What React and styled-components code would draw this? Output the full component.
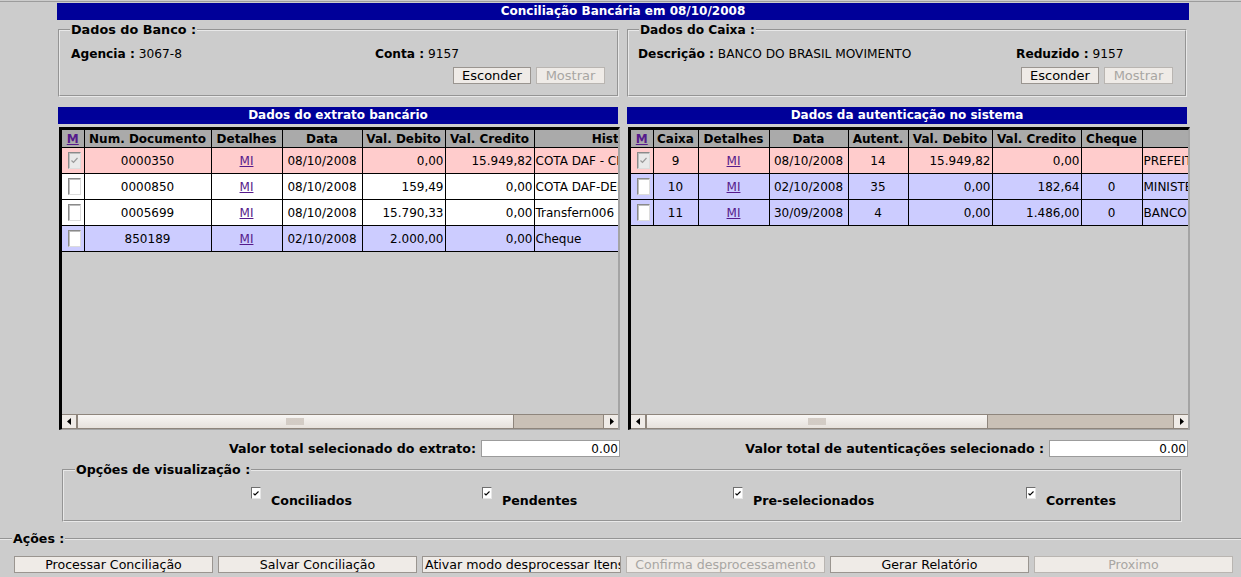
import React from "react";
import styled, { createGlobalStyle } from "styled-components";

const GlobalStyle = createGlobalStyle`
  html, body {
    margin: 0;
    padding: 0;
    background: #cccccc;
  }
  body {
    font-family: "DejaVu Sans", Verdana, sans-serif;
    font-size: 12px;
    color: #000;
    overflow: hidden;
  }
`;

const Page = styled.div`
  width: 1241px;
  height: 577px;
  overflow: hidden;
  background: #cccccc;
`;

const TopRule = styled.div`
  height: 1px;
  margin-top: 1px;
  background: #9c9c9c;
`;

const Main = styled.div`
  margin-left: 57px;
  width: 1132px;
  display: flex;
  flex-direction: column;
`;

const TitleBar = styled.div`
  margin-top: 1px;
  height: 17px;
  line-height: 17px;
  background: #000099;
  color: #fff;
  font-weight: bold;
  text-align: center;
  white-space: nowrap;
`;

const Fieldset = styled.fieldset`
  box-sizing: border-box;
  margin: 0 0 0 ${(p) => p.$offset || 0}px;
  padding: 0;
  min-width: 0;
  width: ${(p) => p.$width}px;
  height: ${(p) => p.$height}px;
  border: 2px groove #e8e8e8;
`;

const Legend = styled.legend`
  margin-left: ${(p) => p.$indent || 10}px;
  padding: 0 1px;
  font-size: ${(p) => p.$size || 12.6}px;
  font-weight: bold;
  line-height: 14px;
`;

const TopRow = styled.div`
  display: flex;
  margin-top: 3px;
`;

const InfoGrid = styled.div`
  display: grid;
  grid-template-columns: ${(p) => p.$split}px 1fr;
  padding-left: ${(p) => p.$pad}px;
  margin-top: 10px;
  font-size: 12.2px;
  line-height: 14px;
  white-space: nowrap;
`;

const Label = styled.b`
  font-weight: bold;
`;

const ButtonRow = styled.div`
  display: flex;
  justify-content: flex-end;
  gap: 5px;
  padding-right: 12px;
  margin-top: 6px;
`;

const Button = styled.button`
  box-sizing: border-box;
  width: ${(p) => p.$w}px;
  height: 17px;
  padding: 0 ${(p) => (p.$align === "left" ? 2 : 0)}px;
  margin: 0;
  font-family: "DejaVu Sans", Verdana, sans-serif;
  font-size: ${(p) => p.$size || 12.6}px;
  line-height: 15px;
  color: #000;
  background: #efebe7;
  border: 1px solid #9a9590;
  border-radius: 0;
  white-space: nowrap;
  overflow: hidden;
  text-align: ${(p) => p.$align || "center"};
  &:disabled {
    color: #a8a6a3;
    border-color: #b9b5b1;
  }
`;

const TablesRow = styled.div`
  display: flex;
  margin-top: 10px;
`;

const Column = styled.div`
  display: flex;
  flex-direction: column;
  margin-left: ${(p) => p.$offset}px;
`;

const SectionHeader = styled.div`
  width: 560px;
  height: 17px;
  line-height: 17px;
  background: #000099;
  color: #fff;
  font-weight: bold;
  text-align: center;
`;

const Panel = styled.div`
  box-sizing: border-box;
  margin: 3px 0 0 1px;
  width: ${(p) => p.$width}px;
  height: 303px;
  border-left: 3px solid #000;
  border-top: 3px solid #000;
  border-right: 2px solid #a4a4a4;
  border-bottom: 1px solid #a4a4a4;
  display: flex;
  flex-direction: column;
`;

const Viewport = styled.div`
  height: 284px;
  overflow: hidden;
`;

const Grid = styled.table`
  border-collapse: collapse;
  table-layout: fixed;
  width: ${(p) => p.$width}px;
  font-size: 12px;
`;

const HeadCell = styled.th`
  height: 17px;
  padding: 0 1px;
  background: #aaaaaa;
  border: 1px solid #000;
  border-top: none;
  font-weight: bold;
  text-align: center;
  white-space: nowrap;
  overflow: hidden;
  &:first-child {
    border-left: none;
  }
`;

const Row = styled.tr`
  background: ${(p) =>
    p.$tone === "pink" ? "#ffcccc" : p.$tone === "blue" ? "#ccccff" : "#ffffff"};
`;

const Cell = styled.td`
  height: 25px;
  padding: 0 1px;
  border: 1px solid #000;
  text-align: ${(p) => p.$align || "center"};
  white-space: nowrap;
  overflow: hidden;
  &:first-child {
    border-left: none;
  }
`;

const Link = styled.a`
  color: #551a8b;
  text-decoration: underline;
  font-weight: ${(p) => (p.$bold ? "bold" : "normal")};
`;

const RowCheck = styled.span`
  box-sizing: border-box;
  display: inline-flex;
  align-items: center;
  justify-content: center;
  width: 13px;
  height: 17px;
  margin-left: 4px;
  vertical-align: middle;
  background: ${(p) => (p.$disabled ? "#e9e9e9" : "#fff")};
  border: 1px solid;
  border-color: #8a8a8a #dcdcdc #dcdcdc #8a8a8a;
  box-shadow: inset 1px 1px 0 #bdbdbd;
`;

const ScrollBar = styled.div`
  box-sizing: border-box;
  display: flex;
  height: 15px;
  background: #c9c0b6;
  border-top: 1px solid #8e857c;
  border-bottom: 1px solid #8e857c;
`;

const ScrollArrow = styled.div`
  box-sizing: border-box;
  width: 15px;
  flex: none;
  display: flex;
  align-items: center;
  justify-content: center;
  background: #efebe7;
  border-left: ${(p) => (p.$side === "right" ? "1px solid #8e857c" : "none")};
  border-right: ${(p) => (p.$side === "left" ? "1px solid #8e857c" : "none")};
`;

const ScrollThumb = styled.div`
  box-sizing: border-box;
  flex: none;
  display: flex;
  align-items: center;
  justify-content: center;
  background: linear-gradient(to bottom, #f8f6f4, #e6e1dc);
  border-right: 1px solid #8e857c;
  box-shadow: inset 5px 0 0 -4px #8e857c;
`;

const Grip = styled.span`
  width: 18px;
  height: 7px;
  background-image: radial-gradient(circle, #d2cbc4 0.7px, transparent 0.9px);
  background-size: 2px 2px;
`;

const Trough = styled.div`
  flex: 1;
`;

const TotalsRow = styled.div`
  display: flex;
  margin-top: 10px;
`;

const TotalCell = styled.div`
  width: ${(p) => p.$width}px;
  display: flex;
  justify-content: flex-end;
  align-items: center;
  gap: 5px;
  font-size: 12.6px;
  font-weight: bold;
  white-space: nowrap;
`;

const TotalInput = styled.input`
  box-sizing: border-box;
  width: 139px;
  height: 17px;
  margin: 0;
  padding: 0 1px;
  font-family: "DejaVu Sans", Verdana, sans-serif;
  font-size: 12px;
  text-align: right;
  background: #fff;
  border: 1px solid #9c9c9c;
  outline: none;
`;

const OptionsGrid = styled.div`
  display: grid;
  grid-template-columns: 231px 251px 293px 1fr;
  padding-left: 187px;
  margin-top: 10px;
`;

const Option = styled.label`
  display: flex;
  align-items: flex-start;
  gap: 10px;
  font-size: 12.6px;
  font-weight: bold;
  white-space: nowrap;
`;

const OptionBox = styled.span`
  box-sizing: border-box;
  display: flex;
  align-items: flex-end;
  justify-content: flex-start;
  width: 10px;
  height: 12px;
  padding: 0 0 2px 1px;
  background: #fff;
  border: 1px solid;
  border-color: #6f6f6f #e6e6e6 #e6e6e6 #6f6f6f;
`;

const OptionText = styled.span`
  margin-top: 7px;
  line-height: 14px;
`;

const ActionsBar = styled.div`
  display: flex;
  gap: 5px;
  padding-left: 14px;
  margin-top: 10px;
`;

const Arrow = ({ dir }) => (
  <svg width="5" height="7" viewBox="0 0 5 7">
    {dir === "left" ? <polygon points="4,0 4,7 0,3.5" fill="#000" /> : <polygon points="1,0 1,7 5,3.5" fill="#000" />}
  </svg>
);

const Tick = ({ color, size = 9 }) => (
  <svg width={size} height={size} viewBox="0 0 9 9">
    <polyline points="1.5,4.5 3.5,6.5 7.5,2" fill="none" stroke={color} strokeWidth="1.2" />
  </svg>
);

const SmallTick = () => (
  <svg width="6" height="5" viewBox="0 0 6 5">
    <polyline points="0.5,2.5 2,4 5.5,0.5" fill="none" stroke="#000" strokeWidth="1.1" />
  </svg>
);

const Scroll = ({ thumb }) => (
  <ScrollBar>
    <ScrollArrow $side="left">
      <Arrow dir="left" />
    </ScrollArrow>
    <ScrollThumb style={{ width: thumb }}>
      <Grip />
    </ScrollThumb>
    <Trough />
    <ScrollArrow $side="right">
      <Arrow dir="right" />
    </ScrollArrow>
  </ScrollBar>
);

const extratoCols = [
  { title: "M", w: 22, link: true },
  { title: "Num. Documento", w: 127 },
  { title: "Detalhes", w: 71 },
  { title: "Data", w: 80 },
  { title: "Val. Debito", w: 83, align: "right" },
  { title: "Val. Credito", w: 89, align: "right" },
  { title: "Histórico", w: 176, align: "left" },
];

const extratoRows = [
  { tone: "pink", checked: true, cells: ["0000350", "08/10/2008", "0,00", "15.949,82", "COTA DAF - CREDITO FPM"] },
  { tone: "white", cells: ["0000850", "08/10/2008", "159,49", "0,00", "COTA DAF-DEBITO PASEP"] },
  { tone: "white", cells: ["0005699", "08/10/2008", "15.790,33", "0,00", "Transfern006 - TRANSFERENCIA"] },
  { tone: "blue", cells: ["850189", "02/10/2008", "2.000,00", "0,00", "Cheque"] },
];

const authCols = [
  { title: "M", w: 22, link: true },
  { title: "Caixa", w: 45 },
  { title: "Detalhes", w: 71 },
  { title: "Data", w: 79 },
  { title: "Autent.", w: 60 },
  { title: "Val. Debito", w: 84, align: "right" },
  { title: "Val. Credito", w: 89, align: "right" },
  { title: "Cheque", w: 61 },
  { title: "Histórico", w: 200, align: "left" },
];

const authRows = [
  { tone: "pink", checked: true, cells: ["9", "08/10/2008", "14", "15.949,82", "0,00", "", "PREFEITURA MUNICIPAL"] },
  { tone: "blue", cells: ["10", "02/10/2008", "35", "0,00", "182,64", "0", "MINISTERIO DA SAUDE"] },
  { tone: "blue", cells: ["11", "30/09/2008", "4", "0,00", "1.486,00", "0", "BANCO DO BRASIL"] },
];

const DataTable = ({ cols, rows }) => {
  const total = cols.reduce((s, c) => s + c.w, 0);
  const tail = cols.slice(3);
  return (
    <Grid $width={total}>
      <colgroup>
        {cols.map((c) => (
          <col key={c.title} style={{ width: c.w }} />
        ))}
      </colgroup>
      <thead>
        <tr>
          {cols.map((c) => (
            <HeadCell key={c.title}>{c.link ? <Link $bold>{c.title}</Link> : c.title}</HeadCell>
          ))}
        </tr>
      </thead>
      <tbody>
        {rows.map((r, i) => (
          <Row key={i} $tone={r.tone}>
            <Cell>
              <RowCheck $disabled={r.checked}>{r.checked && <Tick color="#9a9a9a" />}</RowCheck>
            </Cell>
            <Cell>{r.cells[0]}</Cell>
            <Cell>
              <Link>MI</Link>
            </Cell>
            {r.cells.slice(1).map((v, j) => (
              <Cell key={j} $align={tail[j].align}>
                {v}
              </Cell>
            ))}
          </Row>
        ))}
      </tbody>
    </Grid>
  );
};

const options = ["Conciliados", "Pendentes", "Pre-selecionados", "Correntes"];

const actions = [
  { label: "Processar Conciliação" },
  { label: "Salvar Conciliação" },
  { label: "Ativar modo desprocessar Itens", align: "left" },
  { label: "Confirma desprocessamento", disabled: true },
  { label: "Gerar Relatório" },
  { label: "Proximo", disabled: true },
];

export default function App() {
  return (
    <Page>
      <GlobalStyle />
      <TopRule />
      <Main>
        <TitleBar>Conciliação Bancária em 08/10/2008</TitleBar>

        <TopRow>
          <Fieldset $offset={1} $width={561} $height={74}>
            <Legend $size={12.8}>Dados do Banco :</Legend>
            <InfoGrid $split={304} $pad={11}>
              <span>
                <Label>Agencia :</Label> 3067-8
              </span>
              <span>
                <Label>Conta :</Label> 9157
              </span>
            </InfoGrid>
            <ButtonRow>
              <Button $w={78} $size={13}>
                Esconder
              </Button>
              <Button $w={69} $size={13} disabled>
                Mostrar
              </Button>
            </ButtonRow>
          </Fieldset>

          <Fieldset $offset={8} $width={560} $height={74}>
            <Legend $size={12.2}>Dados do Caixa :</Legend>
            <InfoGrid $split={378} $pad={9}>
              <span>
                <Label>Descrição :</Label> BANCO DO BRASIL MOVIMENTO
              </span>
              <span>
                <Label>Reduzido :</Label> 9157
              </span>
            </InfoGrid>
            <ButtonRow>
              <Button $w={78} $size={13}>
                Esconder
              </Button>
              <Button $w={69} $size={13} disabled>
                Mostrar
              </Button>
            </ButtonRow>
          </Fieldset>
        </TopRow>

        <TablesRow>
          <Column $offset={1}>
            <SectionHeader>Dados do extrato bancário</SectionHeader>
            <Panel $width={561}>
              <Viewport>
                <DataTable cols={extratoCols} rows={extratoRows} />
              </Viewport>
              <Scroll thumb={437} />
            </Panel>
          </Column>
          <Column $offset={7}>
            <SectionHeader>Dados da autenticação no sistema</SectionHeader>
            <Panel $width={562}>
              <Viewport>
                <DataTable cols={authCols} rows={authRows} />
              </Viewport>
              <Scroll thumb={342} />
            </Panel>
          </Column>
        </TablesRow>

        <TotalsRow>
          <TotalCell $width={563}>
            Valor total selecionado do extrato:
            <TotalInput readOnly value="0.00" />
          </TotalCell>
          <TotalCell $width={568}>
            Valor total de autenticações selecionado :
            <TotalInput readOnly value="0.00" />
          </TotalCell>
        </TotalsRow>

        <Fieldset $offset={5} $width={1120} $height={59} style={{ marginTop: 6 }}>
          <Legend $indent={11}>Opções de visualização :</Legend>
          <OptionsGrid>
            {options.map((o) => (
              <Option key={o}>
                <OptionBox>
                  <SmallTick />
                </OptionBox>
                <OptionText>{o}</OptionText>
              </Option>
            ))}
          </OptionsGrid>
        </Fieldset>
      </Main>

      <Fieldset $offset={-2} $width={1246} $height={60} style={{ marginTop: 10 }}>
        <Legend $indent={12}>Ações :</Legend>
        <ActionsBar>
          {actions.map((a) => (
            <Button key={a.label} $w={199} $align={a.align} disabled={a.disabled}>
              {a.label}
            </Button>
          ))}
        </ActionsBar>
      </Fieldset>
    </Page>
  );
}
